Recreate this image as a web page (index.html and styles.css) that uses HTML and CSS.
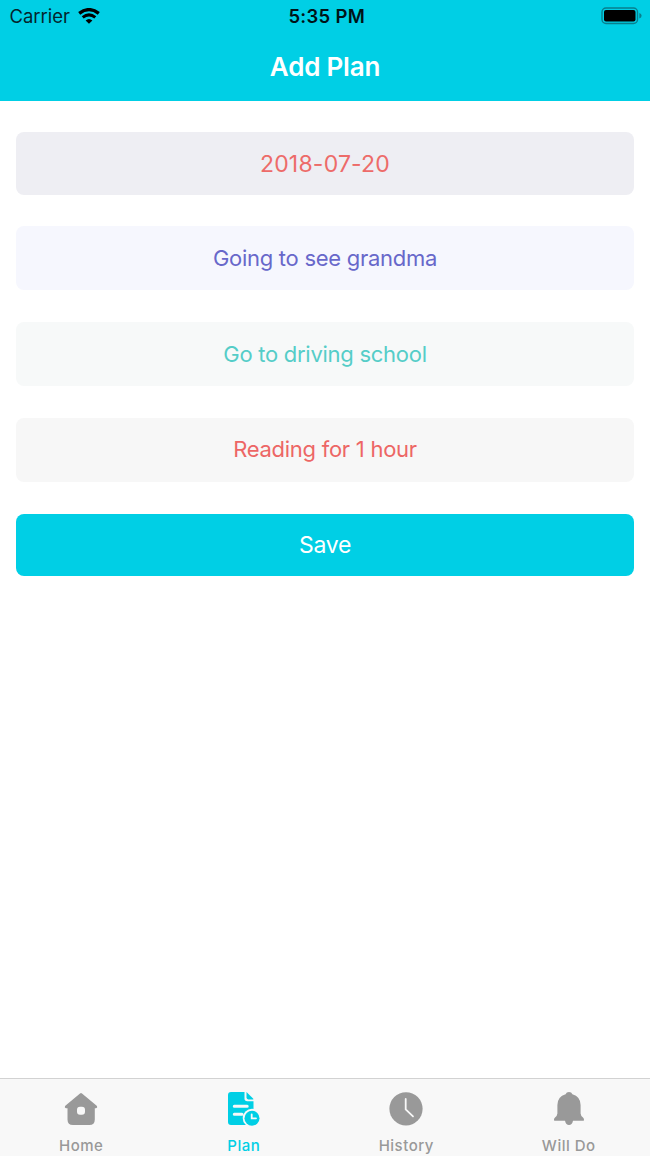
FILE: index.html
```
<!DOCTYPE html>
<html lang="en">
<head>
    <meta charset="utf-8">
    <title>Add Plan</title>
    <meta name="viewport" content="width=device-width, initial-scale=1">
    <link rel="stylesheet" href="styles.css">
</head>
<body>
    <div class="app">
        <header class="header">
            <div class="status-bar">
                <div class="carrier">
                    <span class="carrier-name">Carrier</span>
                    <svg class="wifi" width="22" height="16" viewBox="0 0 22 16" fill="none" stroke="#000">
                        <path d="M1.2 5.4Q11 -2.2 20.8 5.4" stroke-width="3.3"/>
                        <path d="M4.7 9.4Q11 4.4 17.3 9.4" stroke-width="3"/>
                        <path d="M7.6 12.4Q11 9.4 14.4 12.4L11 15.8Z" fill="#000" stroke="none"/>
                    </svg>
                </div>
                <span class="time">5:35 PM</span>
                <svg class="battery" width="41" height="18" viewBox="0 0 41 18">
                    <rect x="1" y="1" width="35.5" height="15.5" rx="4" fill="none" stroke="#087f8d" stroke-width="1.4"/>
                    <rect x="3" y="3" width="31.5" height="11.5" rx="2" fill="#000"/>
                    <path d="M38.3 6Q40.6 6.8 40.6 8.8T38.3 11.6Z" fill="#087f8d"/>
                </svg>
            </div>
            <h1 class="title">Add Plan</h1>
        </header>

        <main class="plan-form">
            <div class="field field-date"><span>2018-07-20</span></div>
            <div class="field field-first"><span>Going to see grandma</span></div>
            <div class="field field-second"><span>Go to driving school</span></div>
            <div class="field field-third"><span>Reading for 1 hour</span></div>
            <button class="save"><span>Save</span></button>
        </main>

        <nav class="tab-bar">
            <a class="tab">
                <svg width="34" height="34" viewBox="0 0 34 34">
                    <path fill="currentColor" fill-rule="evenodd" d="M16 1.4Q17 .7 18 1.4L33 14Q33.8 16 32 16.2H30.8V27.5Q30.8 33 25.3 33H9Q3.5 33 3.5 27.5V16.2H2Q.2 16 1 14ZM16 14.7Q13 14.7 13 17.7V19.7Q13 22.7 16 22.7H18Q21 22.7 21 19.7V17.7Q21 14.7 18 14.7Z"/>
                </svg>
                <span>Home</span>
            </a>
            <a class="tab tab-active">
                <svg width="34" height="34" viewBox="0 0 34 34">
                    <path fill="currentColor" d="M4 0H17.5V6.5Q17.5 9.2 20.2 9.2H26.5V33H4Q1 33 1 30V3Q1 0 4 0Z"/>
                    <path fill="currentColor" d="M19.5 0L26.3 6.8V7.4H21.3Q19.5 7.4 19.5 5.6Z"/>
                    <path d="M7.3 14.2H20.2M7.3 22.3H15" stroke="#f8f8f8" stroke-width="3" stroke-linecap="round"/>
                    <circle cx="25" cy="26" r="9.3" fill="#f8f8f8"/>
                    <circle cx="25" cy="26.2" r="7.5" fill="currentColor"/>
                    <path d="M24.7 22.3V26.3H29" fill="none" stroke="#f8f8f8" stroke-width="1.8" stroke-linecap="round"/>
                </svg>
                <span>Plan</span>
            </a>
            <a class="tab">
                <svg width="34" height="34" viewBox="0 0 34 34">
                    <circle cx="17" cy="16.8" r="16.6" fill="currentColor"/>
                    <path d="M16.7 7V17.3L24 24.3" fill="none" stroke="#f8f8f8" stroke-width="1.8" stroke-linecap="round"/>
                </svg>
                <span>History</span>
            </a>
            <a class="tab">
                <svg width="34" height="34" viewBox="0 0 34 34">
                    <path fill="currentColor" d="M17 0Q19.6 0 20.4 2.2Q28.6 4.6 28.6 13V21.5Q28.8 24 31 25.4Q32.6 26.6 31.8 28.7H21Q20 33 17 33T13 28.7H2.2Q1.4 26.6 3 25.4Q5.2 24 5.4 21.5V13Q5.4 4.6 13.6 2.2Q14.4 0 17 0Z"/>
                </svg>
                <span>Will Do</span>
            </a>
        </nav>
    </div>
</body>
</html>
```
FILE: styles.css
```
* {
    box-sizing: border-box;
}
body {
    margin: 0;
    font-family: Inter, "Liberation Sans", sans-serif;
    background: #fff;
}
.app {
    display: flex;
    flex-direction: column;
    height: 1156px;
}
.header {
    height: 100.5px;
    background: #00cfe5;
}
.status-bar {
    display: grid;
    grid-template-columns: 1fr auto 1fr;
    align-items: center;
    height: 32px;
    padding: 0 8px 0 9.5px;
    color: #04252c;
}
.carrier {
    display: flex;
    align-items: center;
    gap: 8px;
}
.carrier-name {
    font-size: 18.5px;
    letter-spacing: -0.05px;
}
.time {
    padding-left: 2px;
    font-size: 18.5px;
    font-weight: 600;
    letter-spacing: 0.3px;
    color: #001318;
}
.battery {
    justify-self: end;
}
.title {
    margin: 0;
    line-height: 69px;
    font-size: 26px;
    font-weight: 600;
    letter-spacing: -0.2px;
    text-align: center;
    color: #fff;
}
.plan-form {
    display: flex;
    flex: 1;
    flex-direction: column;
    gap: 31.5px;
    padding: 31.5px 16px 0;
}
.field,
.save {
    display: flex;
    align-items: center;
    justify-content: center;
    height: 64.4px;
    padding-bottom: 1px;
    border: none;
    border-radius: 8px;
    font-family: inherit;
    font-size: 22px;
    letter-spacing: -0.27px;
}
.field-date {
    height: 62.5px;
    padding: 1px 0 0;
    font-size: 23px;
    letter-spacing: 0.2px;
    background: #eeeef3;
    color: #ed6b69;
}
.field-first {
    background: #f6f7fe;
    color: #6868ca;
}
.field-second {
    background: #f7f9f9;
    color: #55cdc8;
}
.field-third {
    background: #f7f7f7;
    color: #ed6665;
}
.save {
    height: 62.5px;
    padding: 1px 0 0;
    font-size: 23px;
    background: #00cfe5;
    color: #fff;
}
.tab-bar {
    display: flex;
    height: 78px;
    border-top: 1px solid #d2d2d2;
    background: #f8f8f8;
}
.tab {
    display: flex;
    flex: 1;
    flex-direction: column;
    align-items: center;
    padding-top: 13px;
    font-size: 15px;
    font-weight: 500;
    letter-spacing: 0.5px;
    color: #999;
}
.tab span {
    margin-top: 10px;
    line-height: 20px;
}
.tab-active {
    color: #00cfe5;
}
```
